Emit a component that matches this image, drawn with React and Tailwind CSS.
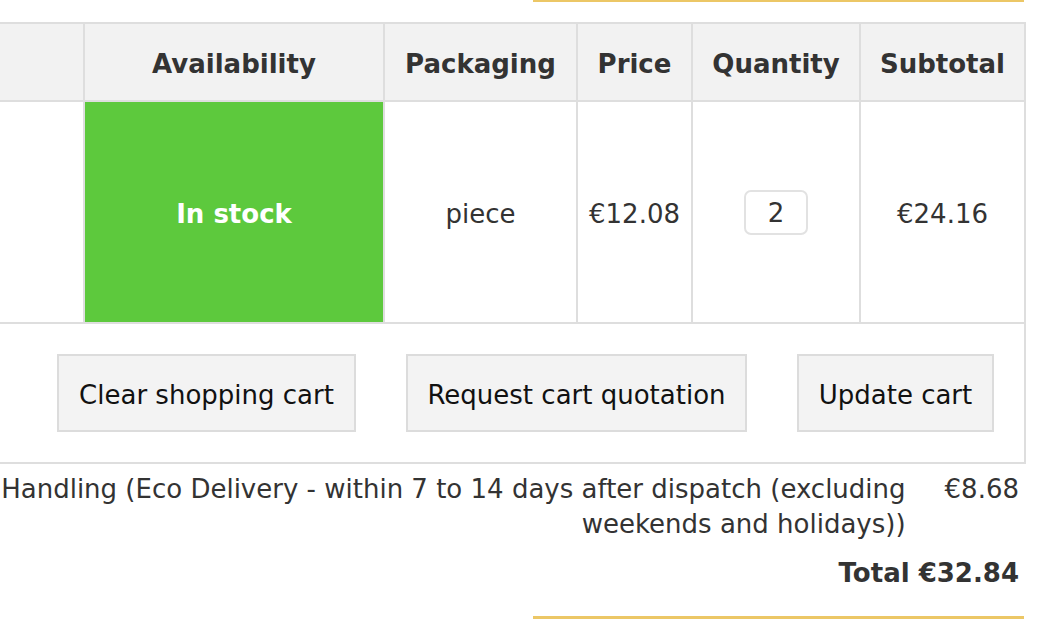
import React from "react";

const font = { fontFamily: '"DejaVu Sans", Verdana, sans-serif' };

const App = () => {
  return (
    <div
      className="w-[1045px] h-[619px] overflow-hidden bg-white text-[26px] text-[#333]"
      style={font}
    >
      {/* top accent */}
      <div className="ml-[533px] w-[491px] h-[2px] bg-[#ecc766]" />

      <div className="mt-[20px] w-[1026px]">
        {/* Header row */}
        <div className="flex h-[80px] border-t-2 border-b-2 border-r-2 border-[#dedede] bg-[#f2f2f2] font-bold">
          <div className="w-[83px] shrink-0" />
          <div className="w-[300px] shrink-0 border-l-2 border-[#dedede] flex items-center justify-center pt-[4px]">
            Availability
          </div>
          <div className="w-[193px] shrink-0 border-l-2 border-[#dedede] flex items-center justify-center pt-[4px]">
            Packaging
          </div>
          <div className="w-[115px] shrink-0 border-l-2 border-[#dedede] flex items-center justify-center pt-[4px]">
            Price
          </div>
          <div className="w-[168px] shrink-0 border-l-2 border-[#dedede] flex items-center justify-center pt-[4px]">
            Quantity
          </div>
          <div className="w-[165px] shrink-0 border-l-2 border-[#dedede] flex items-center justify-center pt-[4px]">
            Subtotal
          </div>
        </div>

        {/* Item row */}
        <div className="flex h-[222px] border-b-2 border-r-2 border-[#dedede]">
          <div className="w-[83px] shrink-0" />
          <div className="w-[300px] shrink-0 border-l-2 border-[#dedede] bg-[#5dc93d] flex items-center justify-center pt-[4px] text-white font-bold">
            In stock
          </div>
          <div className="w-[193px] shrink-0 border-l-2 border-[#dedede] flex items-center justify-center pt-[4px]">
            piece
          </div>
          <div className="w-[115px] shrink-0 border-l-2 border-[#dedede] flex items-center justify-center pt-[4px]">
            €12.08
          </div>
          <div className="w-[168px] shrink-0 border-l-2 border-[#dedede] flex items-center justify-center">
            <div className="w-[64px] h-[45px] pt-[3px] border-2 border-[#e2e2e2] rounded-[7px] flex items-center justify-center">
              2
            </div>
          </div>
          <div className="w-[165px] shrink-0 border-l-2 border-[#dedede] flex items-center justify-center pt-[4px]">
            €24.16
          </div>
        </div>

        {/* Actions */}
        <div className="flex justify-end gap-[50px] h-[140px] pt-[30px] pr-[30px] border-b-2 border-r-2 border-[#dedede] text-[#111]">
          <button className="h-[78px] w-[299px] pt-[5px] bg-[#f3f3f3] border-2 border-[#dcdcdc]">
            Clear shopping cart
          </button>
          <button className="h-[78px] w-[341px] pt-[5px] bg-[#f3f3f3] border-2 border-[#dcdcdc]">
            Request cart quotation
          </button>
          <button className="h-[78px] w-[197px] pt-[5px] bg-[#f3f3f3] border-2 border-[#dcdcdc]">
            Update cart
          </button>
        </div>

        {/* Shipping */}
        <div className="flex justify-end items-start pt-[8px] pr-[7px] leading-[35px]">
          <div className="shrink-0 whitespace-nowrap text-right">
            Shipping &amp; Handling (Eco Delivery - within 7 to 14 days after dispatch (excluding
            <br />
            weekends and holidays))
          </div>
          <div className="shrink-0 ml-[39px]">€8.68</div>
        </div>

        {/* Total */}
        <div className="flex justify-end pt-[14px] pr-[7px] leading-[35px] font-bold">
          Total €32.84
        </div>
      </div>

      {/* bottom accent */}
      <div className="mt-[25px] ml-[533px] w-[491px] h-[3px] bg-[#ecc766]" />
    </div>
  );
};

export default App;
